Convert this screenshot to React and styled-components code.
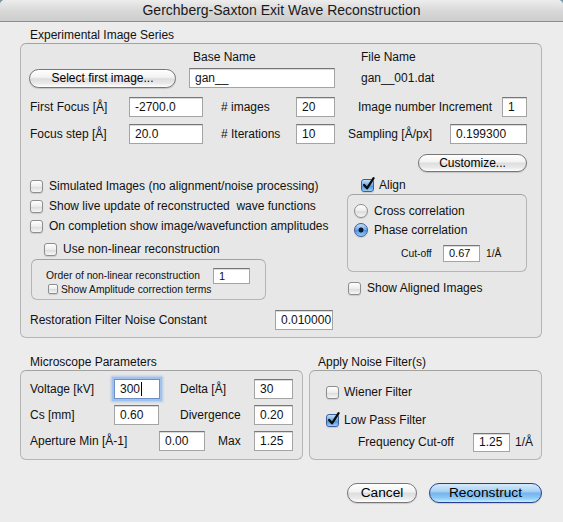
import React from 'react'
import styled, { createGlobalStyle } from 'styled-components'

const GlobalStyle = createGlobalStyle`
    html, body {
        margin: 0;
        padding: 0;
        background: #7d97a0;
    }
    * {
        box-sizing: border-box;
    }
`

const Window = styled.div`
    width: 563px;
    height: 522px;
    background: #ececec;
    border-radius: 5px 5px 0 0;
    overflow: hidden;
    display: flex;
    flex-direction: column;
    font-family: "Liberation Sans", Arial, sans-serif;
    font-size: 12px;
    color: #111;
`

const TitleBar = styled.div`
    height: 22px;
    flex-shrink: 0;
    border-bottom: 1px solid #8e8e8e;
    background: linear-gradient(#ededed, #d9d9d9 50%, #cdcdcd);
    text-align: center;
    line-height: 21px;
    font-size: 14px;
    color: #1a1a1a;
`

const Content = styled.div`
    display: flex;
    flex-direction: column;
    padding: 0 21px 0 20px;
`

const GroupLabel = styled.div`
    height: 14px;
    line-height: 14px;
    padding-left: ${({ $indent }) => $indent ?? 10}px;
    margin-top: ${({ $top }) => $top ?? 0}px;
    margin-bottom: 1px;
`

const Box = styled.div`
    border: 1px solid #b5b5b5;
    border-top-color: #a2a2a2;
    border-radius: 6px;
    background: #e7e7e7;
    height: ${({ $h }) => $h}px;
    display: flex;
    flex-direction: column;
`

const SeriesBox = styled(Box)`
    padding: 0 14px 0 9px;
`

const Row = styled.div`
    display: flex;
    align-items: center;
    flex-shrink: 0;
    height: ${({ $h }) => $h ?? 20}px;
    margin-top: ${({ $top }) => $top ?? 0}px;
    padding-left: ${({ $indent }) => $indent ?? 0}px;
    justify-content: ${({ $end }) => ($end ? 'flex-end' : 'flex-start')};
    font-size: ${({ $small }) => ($small ? '10.3px' : '12px')};
`

const Label = styled.span`
    flex-shrink: 0;
    width: ${({ $w }) => ($w ? `${$w}px` : 'auto')};
    margin-left: ${({ $ml }) => $ml ?? 0}px;
    white-space: nowrap;
`

const Field = styled.div`
    flex-shrink: 0;
    width: ${({ $w }) => $w}px;
    height: ${({ $h }) => $h ?? 20}px;
    margin-left: ${({ $ml }) => $ml ?? 0}px;
    padding-left: 5px;
    line-height: ${({ $h }) => ($h ?? 20) - 2}px;
    font-size: ${({ $small }) => ($small ? '11px' : '12px')};
    background: #fff;
    border: 1px solid #a4a4a4;
    border-top-color: #777;
    box-shadow: inset 0 1px 0 #dadada;
    white-space: nowrap;
    display: flex;
    align-items: center;
    ${({ $focus }) =>
        $focus &&
        `
        border-color: #6d8fc4;
        box-shadow: 0 0 0 2px #9fc2ee, 0 0 2px 3px rgba(110, 160, 230, 0.45);
    `}
`

const Caret = styled.span`
    display: inline-block;
    width: 1px;
    height: 14px;
    background: #000;
    margin-left: 1px;
`

const PillButton = styled.button`
    flex-shrink: 0;
    width: ${({ $w }) => $w}px;
    height: ${({ $h }) => $h ?? 19}px;
    margin-left: ${({ $ml }) => $ml ?? 0}px;
    padding: 0;
    border-radius: 10px;
    border: 1px solid ${({ $primary }) => ($primary ? '#2a3f8c' : '#777')};
    font-family: "Liberation Sans", Arial, sans-serif;
    font-size: ${({ $big }) => ($big ? '13.7px' : '12px')};
    color: #000;
    line-height: 1;
    background: ${({ $primary }) =>
        $primary
            ? 'linear-gradient(#d4ebfb 0%, #a9d2f5 40%, #76b4ec 52%, #8ccaf6 78%, #c6f0ff 100%)'
            : 'linear-gradient(#ffffff 0%, #f3f3f3 42%, #dedede 52%, #e9e9e9 78%, #ffffff 100%)'};
    box-shadow: 0 1px 1px rgba(0, 0, 0, 0.15);
`

const Columns = styled.div`
    display: flex;
    margin-top: ${({ $top }) => $top ?? 0}px;
    gap: ${({ $gap }) => $gap ?? 0}px;
`

const Column = styled.div`
    display: flex;
    flex-direction: column;
    flex: ${({ $w }) => ($w ? `0 0 ${$w}px` : '1')};
`

const CheckRow = styled(Row)`
    gap: ${({ $gap }) => $gap ?? 6}px;
`

const CheckBoxWrap = styled.span`
    position: relative;
    flex-shrink: 0;
    width: ${({ $size }) => $size}px;
    height: ${({ $size }) => $size}px;
    border-radius: ${({ $size }) => ($size > 10 ? 3 : 2)}px;
    border: 1px solid ${({ $on }) => ($on ? '#3e5d9c' : '#8d8d8d')};
    background: ${({ $on }) =>
        $on
            ? 'linear-gradient(#c3e0f7, #6aa8e6 50%, #4f93dc 55%, #9ad0f7)'
            : 'linear-gradient(#ffffff, #ececec 50%, #dcdcdc 55%, #f7f7f7)'};
    box-shadow: 0 1px 1px rgba(0, 0, 0, 0.12);
`

const Tick = styled.svg`
    position: absolute;
    left: 0px;
    top: -3px;
    overflow: visible;
`

const CheckBox = ({ on, size = 13 }) => (
    <CheckBoxWrap $on={on} $size={size}>
        {on && (
            <Tick width="13" height="14" viewBox="0 0 13 14">
                <path d="M2.2 8 L5 11.3 L11.6 1.2" fill="none" stroke="#0d0d0d" strokeWidth="2.3" strokeLinecap="round" strokeLinejoin="round" />
            </Tick>
        )}
    </CheckBoxWrap>
)

const RadioDot = styled.span`
    flex-shrink: 0;
    width: 14px;
    height: 14px;
    border-radius: 50%;
    border: 1px solid ${({ $on }) => ($on ? '#3e5d9c' : '#8d8d8d')};
    background: ${({ $on }) =>
        $on
            ? 'radial-gradient(circle, #10182e 0 2.2px, transparent 2.8px), linear-gradient(#c3e0f7, #6aa8e6 50%, #4f93dc 55%, #9ad0f7)'
            : 'linear-gradient(#ffffff, #ececec 50%, #dcdcdc 55%, #f7f7f7)'};
    box-shadow: 0 1px 1px rgba(0, 0, 0, 0.12);
`

const NonLinearBox = styled(Box)`
    margin-left: 1px;
    width: 235px;
    padding: 8px 0 0 14px;
`

const AlignBox = styled(Box)`
    margin-left: 1px;
    width: 180px;
    padding: 6px 0 0 6px;
`

const ParamBox = styled(Box)`
    padding: 8px 0 0 9px;
    gap: 6px;
`

const FilterBox = styled(Box)`
    padding: 11px 0 0 16px;
`

const ButtonBar = styled.div`
    display: flex;
    justify-content: flex-end;
    gap: 12px;
    margin-top: 23px;
`

export default function App() {
    return (
        <>
            <GlobalStyle />
            <Window>
                <TitleBar>Gerchberg-Saxton Exit Wave Reconstruction</TitleBar>
                <Content>
                    <GroupLabel $top={6}>Experimental Image Series</GroupLabel>
                    <SeriesBox $h={295}>
                        <Row $top={6} $h={14}>
                            <Label $w={163} />
                            <Label $w={168}>Base Name</Label>
                            <Label>File Name</Label>
                        </Row>
                        <Row $top={4}>
                            <PillButton $w={147} $ml={-1}>Select first image...</PillButton>
                            <Field $w={146} $ml={13}>gan__</Field>
                            <Label $ml={26}>gan__001.dat</Label>
                        </Row>
                        <Row $top={9}>
                            <Label $w={99}>First Focus [Å]</Label>
                            <Field $w={74}>-2700.0</Field>
                            <Label $w={75} $ml={18}># images</Label>
                            <Field $w={39}>20</Field>
                            <Label $w={144} $ml={23}>Image number Increment</Label>
                            <Field $w={25}>1</Field>
                        </Row>
                        <Row $top={7}>
                            <Label $w={99}>Focus step [Å]</Label>
                            <Field $w={74}>20.0</Field>
                            <Label $w={75} $ml={18}># Iterations</Label>
                            <Field $w={39}>10</Field>
                            <Label $w={102} $ml={13}>Sampling [Å/px]</Label>
                            <Field $w={77}>0.199300</Field>
                        </Row>
                        <Row $top={10} $h={18} $end>
                            <PillButton $w={109} $h={18}>Customize...</PillButton>
                        </Row>

                        <Columns $top={4}>
                            <Column>
                                <CheckRow>
                                    <CheckBox />
                                    <Label>Simulated Images (no alignment/noise processing)</Label>
                                </CheckRow>
                                <CheckRow>
                                    <CheckBox />
                                    <Label>Show live update of reconstructed&nbsp; wave functions</Label>
                                </CheckRow>
                                <CheckRow>
                                    <CheckBox />
                                    <Label>On completion show image/wavefunction amplitudes</Label>
                                </CheckRow>
                                <CheckRow $top={3} $indent={14}>
                                    <CheckBox />
                                    <Label>Use non-linear reconstruction</Label>
                                </CheckRow>
                                <NonLinearBox $h={41}>
                                    <Row $h={15} $small>
                                        <Label $w={167}>Order of non-linear reconstruction</Label>
                                        <Field $w={37} $h={16} $small>1</Field>
                                    </Row>
                                    <CheckRow $h={12} $indent={2} $gap={3} $small>
                                        <CheckBox size={10} />
                                        <Label>Show Amplitude correction terms</Label>
                                    </CheckRow>
                                </NonLinearBox>
                            </Column>
                            <Column $w={180}>
                                <CheckRow $h={18} $indent={15} $gap={5}>
                                    <CheckBox on />
                                    <Label>Align</Label>
                                </CheckRow>
                                <AlignBox $h={78}>
                                    <CheckRow $h={19}>
                                        <RadioDot />
                                        <Label>Cross correlation</Label>
                                    </CheckRow>
                                    <CheckRow $h={19}>
                                        <RadioDot $on />
                                        <Label>Phase correlation</Label>
                                    </CheckRow>
                                    <Row $h={18} $top={5} $small>
                                        <Label $w={42} $ml={47}>Cut-off</Label>
                                        <Field $w={37} $h={17} $small>0.67</Field>
                                        <Label $ml={6}>1/Å</Label>
                                    </Row>
                                </AlignBox>
                                <CheckRow $h={18} $top={7} $indent={2} $gap={6}>
                                    <CheckBox />
                                    <Label>Show Aligned Images</Label>
                                </CheckRow>
                            </Column>
                        </Columns>

                        <Row $top={10}>
                            <Label $w={245}>Restoration Filter Noise Constant</Label>
                            <Field $w={58}>0.010000</Field>
                        </Row>
                    </SeriesBox>

                    <Columns $top={17} $gap={6}>
                        <Column $w={283}>
                            <GroupLabel>Microscope Parameters</GroupLabel>
                            <ParamBox $h={90}>
                                <Row>
                                    <Label $w={84}>Voltage [kV]</Label>
                                    <Field $w={46} $focus>
                                        300
                                        <Caret />
                                    </Field>
                                    <Label $w={74} $ml={20}>Delta [Å]</Label>
                                    <Field $w={39}>30</Field>
                                </Row>
                                <Row>
                                    <Label $w={84}>Cs [mm]</Label>
                                    <Field $w={45}>0.60</Field>
                                    <Label $w={74} $ml={21}>Divergence</Label>
                                    <Field $w={39}>0.20</Field>
                                </Row>
                                <Row>
                                    <Label $w={129}>Aperture Min [Å-1]</Label>
                                    <Field $w={46}>0.00</Field>
                                    <Label $w={36} $ml={13}>Max</Label>
                                    <Field $w={39}>1.25</Field>
                                </Row>
                            </ParamBox>
                        </Column>
                        <Column>
                            <GroupLabel $indent={9}>Apply Noise Filter(s)</GroupLabel>
                            <FilterBox $h={90}>
                                <CheckRow $gap={5}>
                                    <CheckBox />
                                    <Label>Wiener Filter</Label>
                                </CheckRow>
                                <CheckRow $top={8} $gap={5}>
                                    <CheckBox on />
                                    <Label>Low Pass Filter</Label>
                                </CheckRow>
                                <Row $top={2}>
                                    <Label $w={115} $ml={32}>Frequency Cut-off</Label>
                                    <Field $w={37} $h={19}>1.25</Field>
                                    <Label $ml={5}>1/Å</Label>
                                </Row>
                            </FilterBox>
                        </Column>
                    </Columns>

                    <ButtonBar>
                        <PillButton $w={70} $h={20} $big>Cancel</PillButton>
                        <PillButton $w={113} $h={20} $big $primary>Reconstruct</PillButton>
                    </ButtonBar>
                </Content>
            </Window>
        </>
    )
}
